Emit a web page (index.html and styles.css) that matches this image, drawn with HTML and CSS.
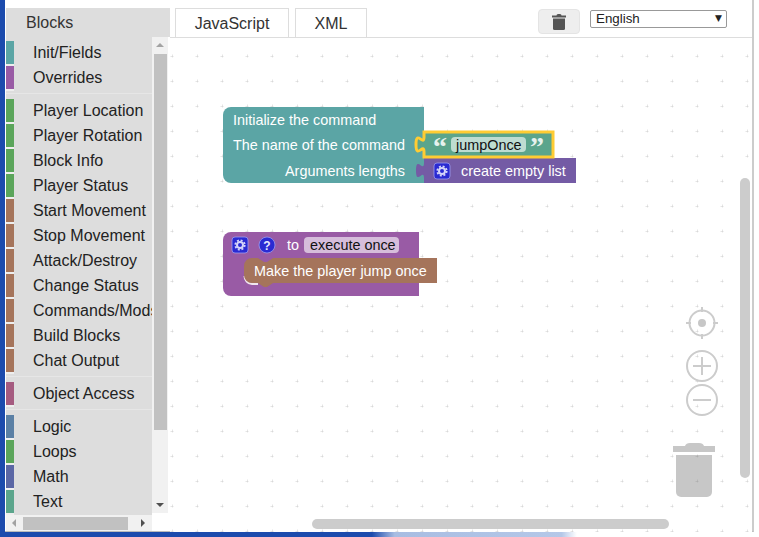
FILE: index.html
```html
<!DOCTYPE html>
<html lang="en">

<head>
  <meta charset="UTF-8">
  <meta name="viewport" content="width=device-width, initial-scale=1.0">
  <title>Blocks</title>
  <link rel="stylesheet" href="styles.css">
</head>

<body>
  <div class="window">
    <div class="sidebar">
      <div class="sidebar-head">Blocks</div>
      <div class="sidebar-body">
        <div class="cats">
          <div class="cat teal">Init/Fields</div>
          <div class="cat purple">Overrides</div>
          <div class="sep"></div>
          <div class="cat green">Player Location</div>
          <div class="cat green">Player Rotation</div>
          <div class="cat green">Block Info</div>
          <div class="cat green">Player Status</div>
          <div class="cat brown">Start Movement</div>
          <div class="cat brown">Stop Movement</div>
          <div class="cat brown">Attack/Destroy</div>
          <div class="cat brown">Change Status</div>
          <div class="cat brown">Commands/Mods</div>
          <div class="cat brown">Build Blocks</div>
          <div class="cat brown">Chat Output</div>
          <div class="sep"></div>
          <div class="cat rose">Object Access</div>
          <div class="sep"></div>
          <div class="cat steel">Logic</div>
          <div class="cat green">Loops</div>
          <div class="cat indigo">Math</div>
          <div class="cat sea">Text</div>
        </div>
        <div class="vscroll">
          <span class="arrow arrow-up"></span>
          <span class="vthumb"></span>
          <span class="arrow arrow-down"></span>
        </div>
      </div>
      <div class="hscroll">
        <span class="arrow arrow-left"></span>
        <span class="hthumb"></span>
        <span class="arrow arrow-right"></span>
      </div>
    </div>

    <div class="main">
      <div class="tabs">
        <div class="tab tab-js">JavaScript</div>
        <div class="tab tab-xml">XML</div>
        <div class="tools">
          <button class="trash-btn">
            <svg width="14" height="16" viewBox="0 0 14 16">
              <path d="M4.5 1.5 Q4.5 0 6 0 H8 Q9.500 0 9.500 1.500 H14 V3.500 H0 V1.500 Z" />
              <path d="M1 4.500 H13 V14.500 Q13 16 11.500 16 H2.500 Q1 16 1 14.500 Z" />
            </svg>
          </button>
          <div class="lang"><span>English</span><span class="lang-arrow">▼</span></div>
        </div>
      </div>

      <svg class="workspace" viewBox="170 38 582 494" width="582" height="494">
        <defs>
          <pattern id="dots" x="172" y="6" width="25" height="25" patternUnits="userSpaceOnUse">
            <path d="M-1.500 0 H1.500 M0 -1.500 V1.500 M23.500 0 H25 M0 23.500 V25" stroke="#ccc" stroke-width="1" />
          </pattern>
          <g id="gear">
            <rect x="0" y="0" width="16" height="16" rx="3" fill="#2a2ad2" stroke="#9c9cf0" stroke-width="0.8" />
            <circle cx="8" cy="8" r="3" fill="none" stroke="#d4d4fa" stroke-width="2" />
            <circle cx="8" cy="8" r="4.700" fill="none" stroke="#d4d4fa" stroke-width="1.800" stroke-dasharray="2 1.700" />
          </g>
        </defs>
        <rect x="170" y="38" width="582" height="494" fill="#fff" />
        <rect x="170" y="38" width="582" height="494" fill="url(#dots)" />

        <!-- command block -->
        <path class="b-teal" d="M223 115 a8 8 0 0 1 8 -8 H424 V183 H231 a8 8 0 0 1 -8 -8 Z" />
        <text class="b-text" x="233" y="125">Initialize the command</text>
        <text class="b-text" x="233" y="150">The name of the command</text>
        <text class="b-text" x="285" y="176">Arguments lengths</text>

        <path class="b-list" d="M424 158 H576 V183 H424 V178 c0,-10 -8,8 -8,-7.500 s8,2.500 8,-7.500 Z" />
        <use href="#gear" x="434" y="163" />
        <text class="b-text" x="461" y="176">create empty list</text>

        <path class="b-string" d="M424 132 H553 V157 H424 V152 c0,-10 -8,8 -8,-7.500 s8,2.500 8,-7.500 Z" />
        <text class="b-quote" x="433" y="156">“</text>
        <rect class="b-field-green" x="451" y="137" width="75" height="15" rx="4" />
        <text class="b-text-dark" x="456" y="150">jumpOnce</text>
        <text class="b-quote" x="530" y="156">”</text>

        <!-- function block -->
        <path class="b-purple" d="M223 240 a8 8 0 0 1 8 -8 H419 V296 H231 a8 8 0 0 1 -8 -8 Z" />
        <use href="#gear" x="232" y="237" />
        <circle cx="267" cy="245" r="8" fill="#2a2ad2" stroke="#9c9cf0" stroke-width="0.800" />
        <text class="b-help" x="267" y="249.500">?</text>
        <text class="b-text" x="287" y="250">to</text>
        <rect class="b-field-purple" x="304" y="237" width="95" height="16" rx="4" />
        <text class="b-text-dark" x="310" y="250">execute once</text>

        <path class="b-edge" d="M244.500 276 a8 8 0 0 0 7.500 8 h6" />
        <path class="b-brown" d="M244 266 a8 8 0 0 1 8 -8 h6 l6 4 h3 l6 -4 H437 V283 H273 l-6 4 h-3 l-6 -4 h-6 a8 8 0 0 1 -8 -8 Z" />
        <text class="b-text" x="254" y="276">Make the player jump once</text>

        <!-- zoom controls -->
        <g class="ctl">
          <circle cx="702" cy="323" r="12.500" />
          <path d="M686 323 H691 M713 323 H718 M702 307 V312 M702 334 V339" />
          <circle cx="702" cy="366" r="15" />
          <path d="M693 366 H711 M702 357 V375" />
          <circle cx="702" cy="400" r="15" />
          <path d="M693 400 H711" />
        </g>
        <circle class="ctl-fill" cx="702" cy="323" r="4" />

        <!-- trash -->
        <path class="ctl-fill" d="M685 446 q1 -3 5 -3 h9 q4 0 5 3 h11 v6 H673 v-6 Z" />
        <path class="ctl-fill" d="M676 455 H712 V492 a5 5 0 0 1 -5 5 H681 a5 5 0 0 1 -5 -5 Z" />

        <!-- scrollbars -->
        <rect class="scroll" x="740" y="178" width="10" height="300" rx="5" />
        <rect class="scroll" x="312" y="519" width="357" height="10" rx="5" />
      </svg>
    </div>
  </div>
</body>

</html>
```

FILE: styles.css
```css
html,
body {
  margin: 0;
  height: 537px;
  overflow: hidden;
}

body {
  font-family: "Liberation Sans", Arial, sans-serif;
  background: linear-gradient(90deg, #1c4bad 0, #1c4bad 49%, #a8bde2 52%, #b5c8e8 74%, #fff 76%);
}

.window {
  width: 746px;
  height: 531px;
  margin-left: 5px;
  padding-left: 1px;
  background: #fff;
  border-right: 2px solid #ccc;
  border-bottom: 1px solid #bbb;
  display: flex;
}

/* toolbox */
.sidebar {
  width: 164px;
  flex: none;
  padding-top: 8px;
  box-sizing: border-box;
  height: 532px;
}

.sidebar-head {
  height: 29px;
  line-height: 29px;
  padding-left: 20px;
  font-size: 16px;
  color: #333;
  background: #ddd;
}

.sidebar-body {
  display: flex;
  height: 478px;
}

.cats {
  width: 146px;
  padding-top: 4px;
  box-sizing: border-box;
  overflow: hidden;
  background: #ddd;
}

.cat {
  height: 25px;
  line-height: 23px;
  padding-left: 19px;
  box-sizing: border-box;
  font-size: 16px;
  color: #222;
  white-space: nowrap;
  border-left: 8px solid;
  position: relative;
}

.cat::after {
  content: "";
  position: absolute;
  left: -8px;
  bottom: 0;
  width: 8px;
  height: 2px;
  background: #eee;
}

.sep {
  height: 8px;
  box-sizing: border-box;
  padding-top: 2px;
}

.sep::before {
  content: "";
  display: block;
  height: 1px;
  background: #e6e6e6;
}

.teal { border-left-color: #5ba5a5; }
.purple { border-left-color: #995ba5; }
.green { border-left-color: #5ba55b; }
.brown { border-left-color: #a5745b; }
.rose { border-left-color: #a55b80; }
.steel { border-left-color: #5b80a5; }
.indigo { border-left-color: #5b67a5; }
.sea { border-left-color: #5ba58c; }

.vscroll {
  width: 16px;
  background: #f1f1f1;
  display: flex;
  flex-direction: column;
  align-items: center;
  justify-content: space-between;
  padding: 6px 0;
  box-sizing: border-box;
  height: 476px;
  position: relative;
}

.vthumb {
  position: absolute;
  left: 2px;
  top: 17px;
  width: 13px;
  height: 376px;
  background: #c1c1c1;
}

.hscroll {
  width: 146px;
  height: 16px;
  background: #f1f1f1;
  display: flex;
  align-items: center;
  padding: 0 6px;
  box-sizing: border-box;
}

.hthumb {
  width: 105px;
  height: 13px;
  margin: 0 13px 0 7px;
  background: #c1c1c1;
}

.arrow {
  width: 0;
  height: 0;
  border: 4px solid transparent;
}

.arrow-up {
  border-top: 0;
  border-bottom: 4px solid #a3a3a3;
}

.arrow-down {
  border-bottom: 0;
  border-top: 4px solid #505050;
}

.arrow-left {
  border-left: 0;
  border-right: 4px solid #a3a3a3;
}

.arrow-right {
  border-right: 0;
  border-left: 4px solid #505050;
}

/* tabs and buttons */
.main {
  flex: 1;
  min-width: 0;
}

.tabs {
  height: 38px;
  box-sizing: border-box;
  padding: 8px 25px 0 5px;
  border-bottom: 1px solid #ddd;
  display: flex;
  gap: 6px;
}

.tab {
  height: 30px;
  box-sizing: border-box;
  border: 1px solid #ddd;
  border-bottom: 0;
  font-size: 16px;
  line-height: 29px;
  text-align: center;
  color: #333;
}

.tab-js {
  width: 114px;
}

.tab-xml {
  width: 72px;
}

.tools {
  margin-left: auto;
  display: flex;
  align-items: flex-start;
  gap: 10px;
}

.trash-btn {
  width: 42px;
  height: 25px;
  margin-top: 1px;
  padding: 0;
  border: 1px solid #e4e4e4;
  border-radius: 4px;
  background: #eee;
  display: flex;
  align-items: center;
  justify-content: center;
}

.trash-btn svg {
  fill: #555;
}

.lang {
  width: 137px;
  height: 18px;
  margin-top: 2px;
  padding: 0 4px 0 5px;
  box-sizing: border-box;
  border: 1px solid #999;
  border-radius: 2px;
  font-size: 13.33px;
  line-height: 15px;
  color: #222;
  background: #fff;
  display: flex;
  justify-content: space-between;
}

.lang-arrow {
  font-family: "DejaVu Sans", sans-serif;
  font-size: 9px;
}

/* workspace */
.workspace {
  display: block;
}

.b-teal { fill: #5ba5a5; }
.b-string { fill: #5ba58c; stroke: #fc3; stroke-width: 3; }
.b-list { fill: #745ba5; }
.b-purple { fill: #995ba5; }
.b-brown { fill: #a5745b; }
.b-edge { fill: none; stroke: #f0e6ee; stroke-width: 2; }
.b-field-green { fill: #bedcd1; }
.b-field-purple { fill: #d6bddb; }

.b-text,
.b-text-dark,
.b-help {
  font-family: "Liberation Sans", Arial, sans-serif;
  font-size: 14.4px;
}

.b-text { fill: #fff; }
.b-text-dark { fill: #111; }

.b-help {
  fill: #e8e8ff;
  font-weight: bold;
  font-size: 12px;
  text-anchor: middle;
}

.b-quote {
  font-family: "Liberation Serif", serif;
  font-size: 28px;
  font-weight: bold;
  fill: #e6f2ee;
}

.ctl {
  fill: none;
  stroke: #ccc;
  stroke-width: 2;
}

.ctl-fill { fill: #666; fill-opacity: 0.37; }
.scroll { fill: #ccc; }
```
